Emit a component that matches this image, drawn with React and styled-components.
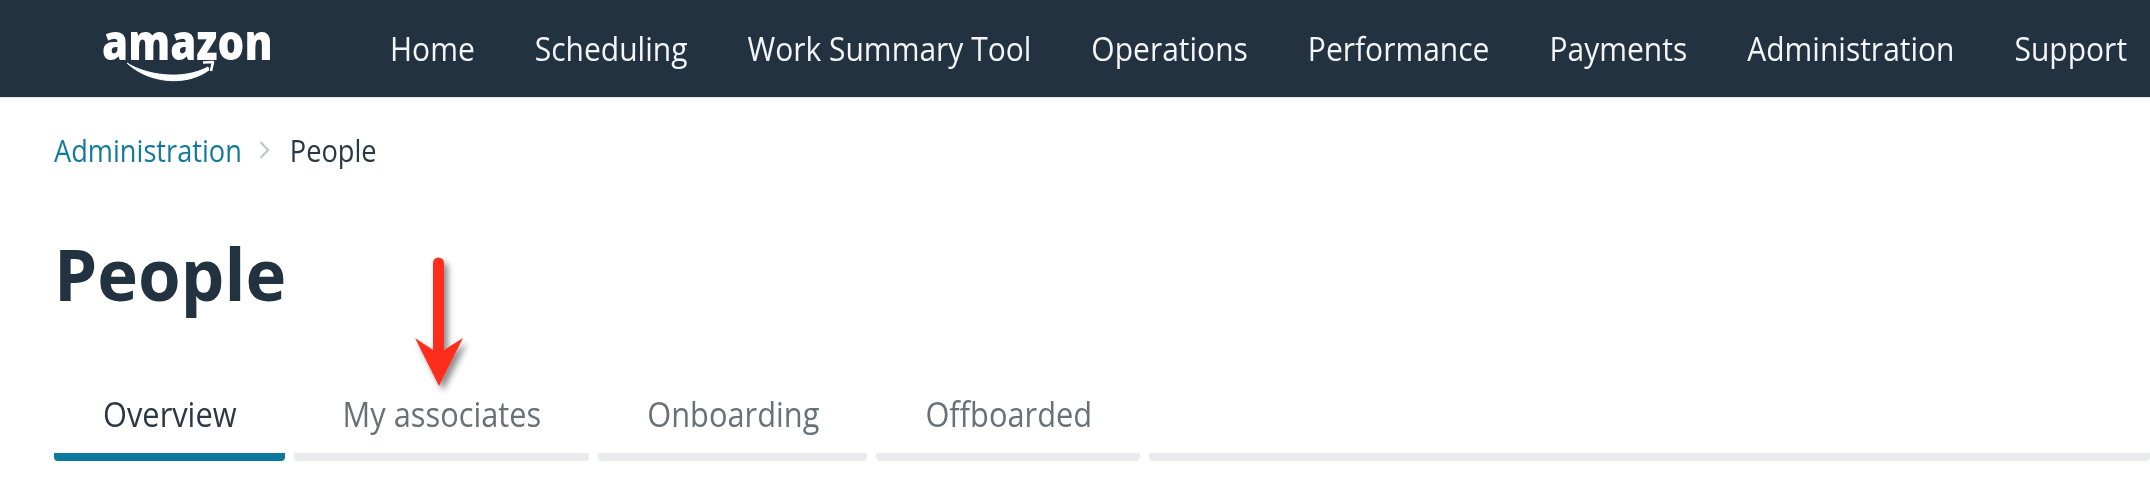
import React from 'react';
import styled, { createGlobalStyle, css } from 'styled-components';

const GlobalStyle = createGlobalStyle`
  html, body {
    margin: 0;
    padding: 0;
    background: #fff;
    font-family: "Open Sans", "Noto Sans", sans-serif;
  }
`;

// the reference is a slightly tall-stretched capture, so text gets the same stretch
const tallText = css`
  display: inline-block;
  transform: scaleY(1.12);
`;

const Page = styled.div`
  position: relative;
  width: 2150px;
  height: 490px;
  overflow: hidden;
`;

const TopBar = styled.header`
  display: flex;
  align-items: center;
  height: 97px;
  padding-left: 102px;
  background: #233240;
  border-bottom: 1px solid #e4e7e9;
`;

const Logo = styled.div`
  position: relative;
  width: 168px;
  height: 50px;
  margin-right: 120px;
  flex-shrink: 0;
`;

const LogoWord = styled.span`
  display: block;
  margin-top: -1px;
  font-size: 42px;
  line-height: 30px;
  font-weight: 800;
  color: #fff;
  transform: scaleY(1.18);
  transform-origin: top left;
`;

const LogoSmile = styled.svg`
  position: absolute;
  left: 24px;
  top: 28px;
`;

const Nav = styled.nav`
  display: flex;
  gap: 60px;
`;

const NavItem = styled.a`
  ${tallText}
  font-size: 30px;
  line-height: 40px;
  color: #f4f5f6;
  white-space: nowrap;
`;

const Crumbs = styled.div`
  display: flex;
  align-items: center;
  height: 38px;
  margin: 33px 0 0 54px;
  font-size: 27.2px;
`;

const CrumbLink = styled.a`
  ${tallText}
  color: #147a9c;
`;

const CrumbSep = styled.svg`
  margin: 0 20px 0 17px;
`;

const CrumbCurrent = styled.span`
  ${tallText}
  color: #2a3744;
  font-weight: 500;
`;

const Title = styled.h1`
  margin: 60px 0 0 54px;
  font-size: 69px;
  line-height: 88px;
  font-weight: 700;
  color: #233240;
  transform: scaleY(1.05);
  transform-origin: left center;
`;

const Tabs = styled.div`
  display: flex;
  gap: 9px;
  margin: 78px 0 0 54px;
`;

const Tab = styled.a`
  display: block;
  flex: ${(p) => (p.$filler ? '1' : '0 0 auto')};
  padding: 0 48px 20px 49px;
  min-height: 38px;
  border-bottom: 8px solid ${(p) => (p.$active ? '#0a7a9e' : '#e9ebed')};
  border-radius: 0 0 4px 4px;
  font-size: 30.8px;
  line-height: 38px;
  color: ${(p) => (p.$active ? '#2a3744' : '#687078')};
  white-space: nowrap;
`;

const TabLabel = styled.span`
  ${tallText}
`;

const Arrow = styled.svg`
  position: absolute;
  left: 405px;
  top: 250px;
`;

const navItems = ['Home', 'Scheduling', 'Work Summary Tool', 'Operations', 'Performance', 'Payments', 'Administration', 'Support'];
const tabs = ['Overview', 'My associates', 'Onboarding', 'Offboarded'];

export default function App() {
  return (
    <Page>
      <GlobalStyle />
      <TopBar>
        <Logo>
          <LogoWord>amazon</LogoWord>
          <LogoSmile width="100" height="32" viewBox="0 0 100 32" fill="none">
            <path d="M1 11C20 23 56 29 82 15L83 18C60 35 22 31 1 11Z" fill="#fff" stroke="#fff" strokeWidth="1" strokeLinejoin="round" />
            <path d="M77 10.5L87 10L85 19" stroke="#fff" strokeWidth="2.6" strokeLinejoin="round" />
          </LogoSmile>
        </Logo>
        <Nav>
          {navItems.map((item) => (
            <NavItem key={item}>{item}</NavItem>
          ))}
        </Nav>
      </TopBar>
      <Crumbs>
        <CrumbLink>Administration</CrumbLink>
        <CrumbSep width="11" height="20" viewBox="0 0 11 20" fill="none">
          <path d="M1.5 2L9 10L1.5 18" stroke="#c4c8cb" strokeWidth="2.4" />
        </CrumbSep>
        <CrumbCurrent>People</CrumbCurrent>
      </Crumbs>
      <Title>People</Title>
      <Tabs>
        {tabs.map((tab, i) => (
          <Tab key={tab} $active={i === 0}>
            <TabLabel>{tab}</TabLabel>
          </Tab>
        ))}
        <Tab $filler />
      </Tabs>
      <Arrow width="72" height="148" viewBox="0 0 72 148" fill="none">
        <defs>
          <filter id="arrowShadow" x="-30%" y="-10%" width="170%" height="130%">
            <feDropShadow dx="4" dy="5" stdDeviation="3" floodColor="#000" floodOpacity="0.45" />
          </filter>
        </defs>
        <path
          d="M28 13a5.5 5.5 0 0 1 11 0V100L58 88L34 136L10 88L28 100Z"
          fill="#ff2d1e"
          filter="url(#arrowShadow)"
        />
      </Arrow>
    </Page>
  );
}
